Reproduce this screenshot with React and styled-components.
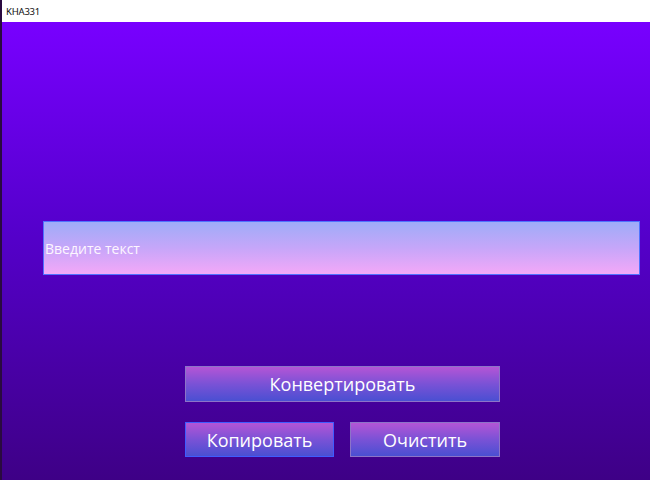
import React from "react";
import styled, { createGlobalStyle } from "styled-components";

const Global = createGlobalStyle`
  html, body { margin: 0; padding: 0; height: 100%; }
  body { font-family: "Open Sans", "Noto Sans", sans-serif; overflow: hidden; }
  #root { height: 100%; }
`;

const Window = styled.div`
  width: 650px;
  height: 480px;
  display: flex;
  flex-direction: column;
  box-sizing: border-box;
  border-left: 2px solid #2a0a40;
`;

const TitleBar = styled.div`
  height: 22px;
  flex: 0 0 22px;
  background: #ffffff;
  display: flex;
  align-items: center;
  padding-left: 4px;
  font-family: "Noto Sans", sans-serif;
  font-size: 9.5px;
  color: #111;
  letter-spacing: -0.2px;
`;

const Main = styled.div`
  flex: 1;
  background: linear-gradient(to bottom, #7800ff 0%, #5500cc 45%, #3e0086 100%);
  display: flex;
  flex-direction: column;
  padding: 199px 10px 0 41px;
`;

const Input = styled.input`
  height: 54px;
  box-sizing: border-box;
  width: 597px;
  border: 1px solid #4f72ff;
  background: linear-gradient(to bottom, #9eacf8 0%, #c6a6f9 50%, #f3a8f8 100%);
  font-family: "Open Sans", sans-serif;
  font-size: 14px;
  color: #ffffff;
  padding: 0 0 0 1px;
  outline: none;
  &::placeholder { color: #fdf6ff; opacity: 1; }
`;

const Buttons = styled.div`
  margin-left: 142px;
  width: 315px;
  display: flex;
  flex-direction: column;
  gap: 20px;
  margin-top: 91px;
`;

const Row = styled.div`
  display: flex;
  justify-content: space-between;
`;

const Button = styled.button`
  box-sizing: border-box;
  height: ${p => p.$h || 36}px;
  width: ${p => p.$w || "100%"};
  border: 1px solid ${p => (p.$focused ? "#3f5cff" : "#8c74c8")};
  background: linear-gradient(to bottom, #b455d6 0%, #7a52d6 50%, #4a4fd2 100%);
  color: #ffffff;
  font-family: "Open Sans", sans-serif;
  font-size: 18px;
  padding: 0;
  cursor: pointer;
  display: flex;
  align-items: center;
  justify-content: center;
`;

export default function App() {
  return (
    <>
      <Global />
      <Window>
        <TitleBar>KHA331</TitleBar>
        <Main>
          <Input placeholder="Введите текст" />
          <Buttons>
            <Button>Конвертировать</Button>
            <Row>
              <Button $w="149px" $h={35} $focused>Копировать</Button>
              <Button $w="150px" $h={35}>Очистить</Button>
            </Row>
          </Buttons>
        </Main>
      </Window>
    </>
  );
}
